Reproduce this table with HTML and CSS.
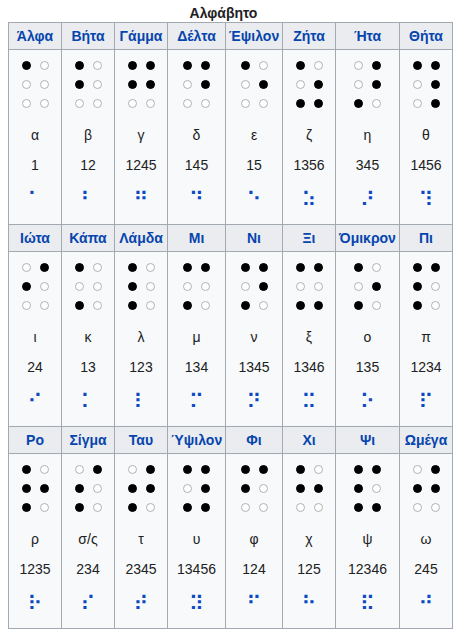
FILE: index.html
```html
<!DOCTYPE html>
<html lang="el">
<head>
<meta charset="utf-8">
<title>Αλφάβητο</title>
<link rel="stylesheet" href="styles.css">
</head>
<body>
<div class="wrap">
  <div class="title">Αλφάβητο</div>
  <div class="alphabet">
    <div class="head">Άλφα</div>
    <div class="head">Βήτα</div>
    <div class="head">Γάμμα</div>
    <div class="head">Δέλτα</div>
    <div class="head">Έψιλον</div>
    <div class="head">Ζήτα</div>
    <div class="head">Ήτα</div>
    <div class="head">Θήτα</div>

    <div class="cell"><div class="dots"><i class="on"></i><i></i><i></i><i></i><i></i><i></i></div><div class="letter">α</div><div class="num">1</div><div class="br">&#x2801;</div></div>
    <div class="cell"><div class="dots"><i class="on"></i><i></i><i class="on"></i><i></i><i></i><i></i></div><div class="letter">β</div><div class="num">12</div><div class="br">&#x2803;</div></div>
    <div class="cell"><div class="dots"><i class="on"></i><i class="on"></i><i class="on"></i><i class="on"></i><i></i><i></i></div><div class="letter">γ</div><div class="num">1245</div><div class="br">&#x281B;</div></div>
    <div class="cell"><div class="dots"><i class="on"></i><i class="on"></i><i></i><i class="on"></i><i></i><i></i></div><div class="letter">δ</div><div class="num">145</div><div class="br">&#x2819;</div></div>
    <div class="cell"><div class="dots"><i class="on"></i><i></i><i></i><i class="on"></i><i></i><i></i></div><div class="letter">ε</div><div class="num">15</div><div class="br">&#x2811;</div></div>
    <div class="cell"><div class="dots"><i class="on"></i><i></i><i></i><i class="on"></i><i class="on"></i><i class="on"></i></div><div class="letter">ζ</div><div class="num">1356</div><div class="br">&#x2835;</div></div>
    <div class="cell"><div class="dots"><i></i><i class="on"></i><i></i><i class="on"></i><i class="on"></i><i></i></div><div class="letter">η</div><div class="num">345</div><div class="br">&#x281C;</div></div>
    <div class="cell"><div class="dots"><i class="on"></i><i class="on"></i><i></i><i class="on"></i><i></i><i class="on"></i></div><div class="letter">θ</div><div class="num">1456</div><div class="br">&#x2839;</div></div>

    <div class="head">Ιώτα</div>
    <div class="head">Κάπα</div>
    <div class="head">Λάμδα</div>
    <div class="head">Μι</div>
    <div class="head">Νι</div>
    <div class="head">Ξι</div>
    <div class="head">Όμικρον</div>
    <div class="head">Πι</div>

    <div class="cell"><div class="dots"><i></i><i class="on"></i><i class="on"></i><i></i><i></i><i></i></div><div class="letter">ι</div><div class="num">24</div><div class="br">&#x280A;</div></div>
    <div class="cell"><div class="dots"><i class="on"></i><i></i><i></i><i></i><i class="on"></i><i></i></div><div class="letter">κ</div><div class="num">13</div><div class="br">&#x2805;</div></div>
    <div class="cell"><div class="dots"><i class="on"></i><i></i><i class="on"></i><i></i><i class="on"></i><i></i></div><div class="letter">λ</div><div class="num">123</div><div class="br">&#x2807;</div></div>
    <div class="cell"><div class="dots"><i class="on"></i><i class="on"></i><i></i><i></i><i class="on"></i><i></i></div><div class="letter">μ</div><div class="num">134</div><div class="br">&#x280D;</div></div>
    <div class="cell"><div class="dots"><i class="on"></i><i class="on"></i><i></i><i class="on"></i><i class="on"></i><i></i></div><div class="letter">ν</div><div class="num">1345</div><div class="br">&#x281D;</div></div>
    <div class="cell"><div class="dots"><i class="on"></i><i class="on"></i><i></i><i></i><i class="on"></i><i class="on"></i></div><div class="letter">ξ</div><div class="num">1346</div><div class="br">&#x282D;</div></div>
    <div class="cell"><div class="dots"><i class="on"></i><i></i><i></i><i class="on"></i><i class="on"></i><i></i></div><div class="letter">ο</div><div class="num">135</div><div class="br">&#x2815;</div></div>
    <div class="cell"><div class="dots"><i class="on"></i><i class="on"></i><i class="on"></i><i></i><i class="on"></i><i></i></div><div class="letter">π</div><div class="num">1234</div><div class="br">&#x280F;</div></div>

    <div class="head">Ρο</div>
    <div class="head">Σίγμα</div>
    <div class="head">Ταυ</div>
    <div class="head">Ύψιλον</div>
    <div class="head">Φι</div>
    <div class="head">Χι</div>
    <div class="head">Ψι</div>
    <div class="head">Ωμέγα</div>

    <div class="cell"><div class="dots"><i class="on"></i><i></i><i class="on"></i><i class="on"></i><i class="on"></i><i></i></div><div class="letter">ρ</div><div class="num">1235</div><div class="br">&#x2817;</div></div>
    <div class="cell"><div class="dots"><i></i><i class="on"></i><i class="on"></i><i></i><i class="on"></i><i></i></div><div class="letter">σ/ς</div><div class="num">234</div><div class="br">&#x280E;</div></div>
    <div class="cell"><div class="dots"><i></i><i class="on"></i><i class="on"></i><i class="on"></i><i class="on"></i><i></i></div><div class="letter">τ</div><div class="num">2345</div><div class="br">&#x281E;</div></div>
    <div class="cell"><div class="dots"><i class="on"></i><i class="on"></i><i></i><i class="on"></i><i class="on"></i><i class="on"></i></div><div class="letter">υ</div><div class="num">13456</div><div class="br">&#x283D;</div></div>
    <div class="cell"><div class="dots"><i class="on"></i><i class="on"></i><i class="on"></i><i></i><i></i><i></i></div><div class="letter">φ</div><div class="num">124</div><div class="br">&#x280B;</div></div>
    <div class="cell"><div class="dots"><i class="on"></i><i></i><i class="on"></i><i class="on"></i><i></i><i></i></div><div class="letter">χ</div><div class="num">125</div><div class="br">&#x2813;</div></div>
    <div class="cell"><div class="dots"><i class="on"></i><i class="on"></i><i class="on"></i><i></i><i class="on"></i><i class="on"></i></div><div class="letter">ψ</div><div class="num">12346</div><div class="br">&#x282F;</div></div>
    <div class="cell"><div class="dots"><i></i><i class="on"></i><i class="on"></i><i class="on"></i><i></i><i></i></div><div class="letter">ω</div><div class="num">245</div><div class="br">&#x281A;</div></div>
  </div>
</div>
</body>
</html>
```

FILE: styles.css
```css
html, body {
  margin: 0;
  padding: 0;
  background: #ffffff;
}

body {
  font-family: "Liberation Sans", Arial, sans-serif;
  color: #202122;
}

.wrap {
  padding: 4px 0 0 8px;
  width: 445px;
}

.title {
  height: 18px;
  line-height: 18px;
  padding-right: 14px;
  font-size: 14px;
  font-weight: bold;
  text-align: center;
}

.alphabet {
  display: grid;
  grid-template-columns: 52px 52px 52px 57px 56px 52px 63px 52px;
  grid-template-rows: 26px 174px 26px 174px 26px 174px;
  gap: 1px;
  width: max-content;
  background: #a2a9b1;
  border: 1px solid #a2a9b1;
}

.head {
  display: flex;
  align-items: center;
  justify-content: center;
  background: #eaecf0;
  color: #0645ad;
  font-size: 14px;
  font-weight: bold;
  white-space: nowrap;
}

.cell {
  display: flex;
  flex-direction: column;
  align-items: center;
  padding-top: 11px;
  background: #f8f9fa;
}

.dots {
  display: grid;
  grid-template-columns: 9px 9px;
  grid-auto-rows: 9px;
  column-gap: 9px;
  row-gap: 10px;
}

.dots i {
  display: block;
  width: 9px;
  height: 9px;
  box-sizing: border-box;
  border-radius: 50%;
  border: 1px solid #b2b2b2;
  background: #ffffff;
}

.dots i.on {
  background: #000000;
  border-color: #000000;
}

.letter {
  margin-top: 17px;
  font-size: 14px;
  line-height: 20px;
}

.num {
  margin-top: 10px;
  font-size: 14px;
  line-height: 20px;
}

.br {
  margin-top: 15px;
  font-family: "DejaVu Sans", sans-serif;
  font-size: 21px;
  line-height: 21px;
  color: #0b48c4;
}
```
